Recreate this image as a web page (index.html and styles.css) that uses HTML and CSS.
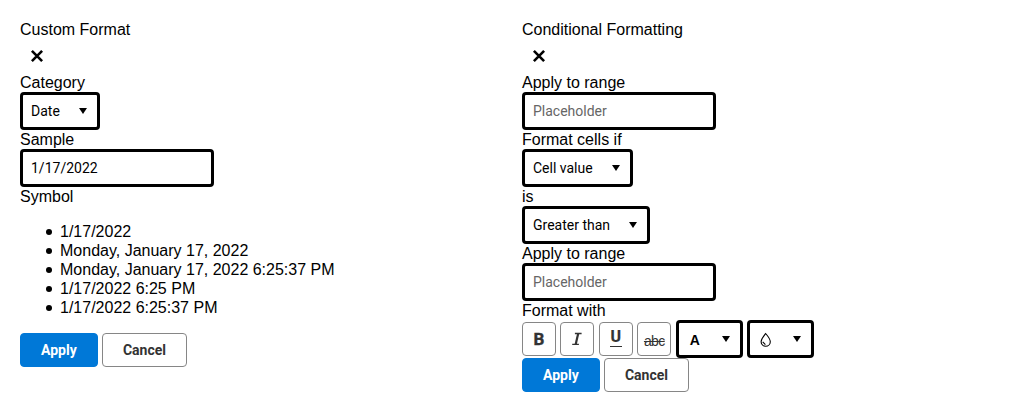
FILE: index.html
```html
<!DOCTYPE html>
<html lang="en">
<head>
<meta charset="utf-8">
<title>Format dialogs</title>
<link rel="stylesheet" href="styles.css">
</head>
<body>
<main class="dialogs">
  <section class="dialog">
    <div class="label">Custom Format</div>
    <button class="close" aria-label="Close"><svg width="14" height="14" viewBox="0 0 14 14"><path class="cross" d="M1.9 1.9 12.1 12.1M12.1 1.9 1.9 12.1"/></svg></button>
    <div class="label">Category</div>
    <button class="select select-date"><span>Date</span><svg class="arrow" width="8" height="6" viewBox="0 0 8 6"><path d="M0 0H8L4 6Z"/></svg></button>
    <div class="label">Sample</div>
    <input class="field" type="text" value="1/17/2022" aria-label="Sample">
    <div class="label">Symbol</div>
    <ul class="symbols">
      <li>1/17/2022</li>
      <li>Monday, January 17, 2022</li>
      <li>Monday, January 17, 2022 6:25:37 PM</li>
      <li>1/17/2022 6:25 PM</li>
      <li>1/17/2022 6:25:37 PM</li>
    </ul>
    <div class="actions"><button class="btn primary">Apply</button><button class="btn cancel">Cancel</button></div>
  </section>
  <section class="dialog">
    <div class="label">Conditional Formatting</div>
    <button class="close" aria-label="Close"><svg width="14" height="14" viewBox="0 0 14 14"><path class="cross" d="M1.9 1.9 12.1 12.1M12.1 1.9 1.9 12.1"/></svg></button>
    <div class="label">Apply to range</div>
    <input class="field" type="text" placeholder="Placeholder" aria-label="Apply to range">
    <div class="label">Format cells if</div>
    <button class="select select-cell"><span>Cell value</span><svg class="arrow" width="8" height="6" viewBox="0 0 8 6"><path d="M0 0H8L4 6Z"/></svg></button>
    <div class="label">is</div>
    <button class="select select-compare"><span>Greater than</span><svg class="arrow" width="8" height="6" viewBox="0 0 8 6"><path d="M0 0H8L4 6Z"/></svg></button>
    <div class="label">Apply to range</div>
    <input class="field" type="text" placeholder="Placeholder" aria-label="Apply to range">
    <div class="label">Format with</div>
    <div class="toolbar">
      <button class="btn tool bold" aria-label="Bold">B</button>
      <button class="btn tool" aria-label="Italic"><svg width="18" height="18" viewBox="0 0 18 18"><path class="glyph italic-stem" d="M10.2 3.6 7.7 14.2"/><path class="glyph thin" d="M6.9 3.5H13.6M4.2 14.4H10.9"/></svg></button>
      <button class="btn tool under" aria-label="Underline"><span>U</span></button>
      <button class="btn tool strike" aria-label="Strikethrough"><span>abc</span></button>
      <button class="select select-tool"><span class="letter">A</span><svg class="arrow" width="8" height="6" viewBox="0 0 8 6"><path d="M0 0H8L4 6Z"/></svg></button>
      <button class="select select-tool"><svg class="drop" width="12" height="16" viewBox="0 0 12 16"><path d="M5.6 1.5C7.8 4 10.3 7.2 10.3 9.7A4.6 4.6 0 0 1 1.1 9.7C1.1 7.2 3.7 4 5.6 1.5ZM2.7 9.8 5.4 12.6"/></svg><svg class="arrow" width="8" height="6" viewBox="0 0 8 6"><path d="M0 0H8L4 6Z"/></svg></button>
    </div>
    <div class="actions"><button class="btn primary">Apply</button><button class="btn cancel">Cancel</button></div>
  </section>
</main>
</body>
</html>
```
FILE: styles.css
```css
* { box-sizing: border-box; }
body {
  margin: 0;
  background: #fff;
  color: #000;
  font: 16px/19px "Liberation Sans", Arial, sans-serif;
}
.dialogs { display: grid; grid-template-columns: 502px 502px; padding: 20px 0 0 20px; }
.dialog { display: flex; flex-direction: column; align-items: flex-start; }
.label { height: 19px; }
button, input { margin: 0; padding: 0; font: 14px/20px Roboto, sans-serif; color: #000; background: #fff; }
.close { display: flex; align-items: center; justify-content: center; width: 34px; height: 34px; border: 0; }
.cross { fill: none; stroke: #000; stroke-width: 2.6; }
.select {
  display: flex;
  align-items: center;
  justify-content: space-between;
  height: 38px;
  padding: 0 10px 0 8px;
  border: 3px solid #000;
  border-radius: 4px;
}
.select-date { width: 80px; }
.select-cell { width: 111px; }
.select-compare { width: 128px; }
.arrow { fill: #000; }
.field { width: 194px; height: 38px; padding: 0 8px; border: 3px solid #000; border-radius: 4px; }
.field::placeholder { color: #666; opacity: 1; }
.symbols { margin: 16px 0; padding-left: 26px; list-style: none; }
.symbols li { display: flex; align-items: center; height: 19px; }
.symbols li::before { content: ""; width: 6px; height: 6px; margin: 1px 8px 0 0; border-radius: 50%; background: #000; }
.actions, .toolbar { display: flex; align-items: center; gap: 4.45px; }
.btn { height: 34px; border: 1px solid #868686; border-radius: 4px; color: #333; font-weight: 700; }
.primary { width: 77.7px; border-color: #0078d7; background: #0078d7; color: #fff; }
.cancel { width: 84.7px; }
.toolbar { height: 38px; }
.tool { display: flex; align-items: center; justify-content: center; width: 34px; }
.bold { font: 700 17px/20px Roboto, sans-serif; -webkit-text-stroke: .4px #333; }
.under { font: 700 16px/14px Roboto, sans-serif; -webkit-text-stroke: .2px #333; }
.under span { height: 17px; margin-top: -2px; padding: 0 1px; border-bottom: 1.5px solid #333; }
.glyph { fill: none; stroke: #333; }
.italic-stem { stroke-width: 2.2; }
.thin { stroke-width: 1.4; }
.strike { font: 14px/18px "Liberation Sans", Arial, sans-serif; letter-spacing: -.6px; text-decoration: line-through; }
.strike span { padding-top: 3px; }
.select-tool { width: 67px; }
.letter { padding: 2px 0 0 3px; font: 700 14px/18px "Liberation Sans", Arial, sans-serif; }
.drop { margin: 2px 0 0 2px; fill: none; stroke: #000; stroke-width: 1.1; }
```
